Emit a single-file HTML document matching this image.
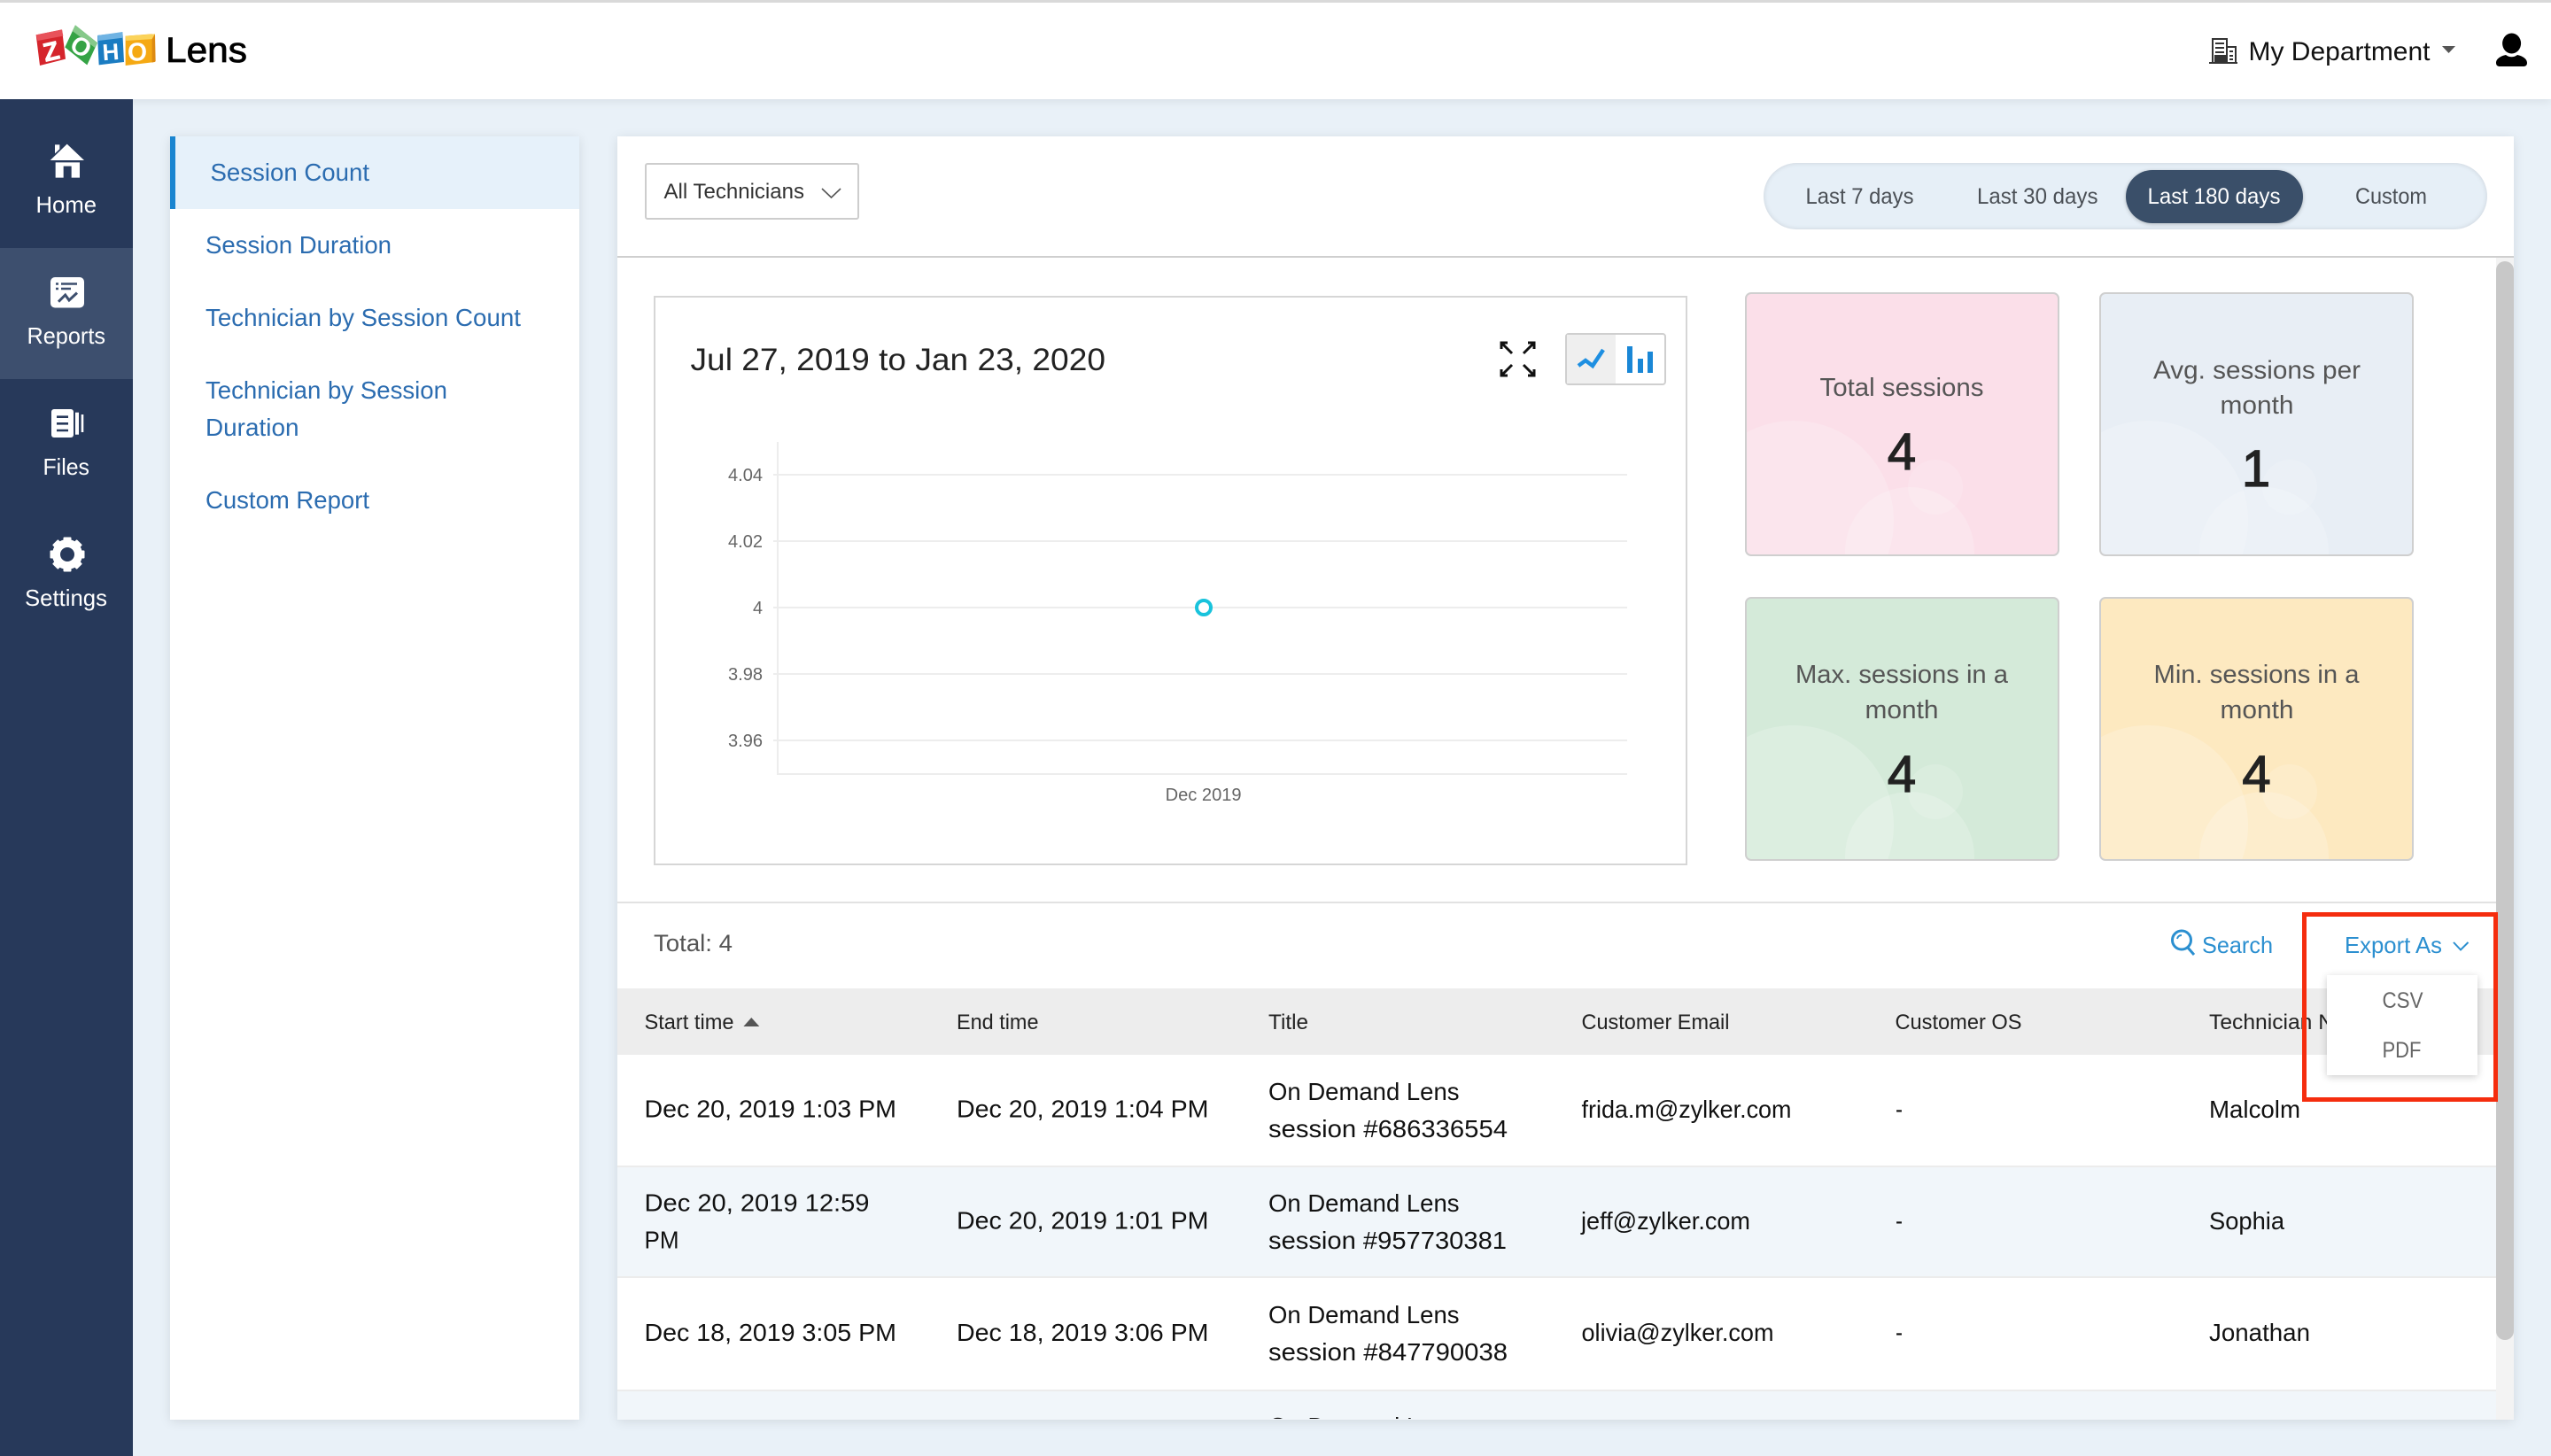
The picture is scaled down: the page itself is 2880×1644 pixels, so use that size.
<!DOCTYPE html>
<html><head><meta charset="utf-8"><title>Zoho Lens Reports</title>
<style>
html,body{margin:0;padding:0;width:2880px;height:1644px;overflow:hidden;background:#e9f1f8}
body{position:relative;font-family:"Liberation Sans",sans-serif}
.b{position:absolute;box-sizing:border-box}
.card{position:absolute;box-sizing:border-box;width:355px;height:298px;border:2px solid #cfcfcf;border-radius:7px;overflow:hidden}
.card i{position:absolute;display:block;border-radius:50%;background:rgba(255,255,255,.2)}
.card .c1{left:-60px;top:143px;width:226px;height:226px}
.card .c2{left:111px;top:218px;width:146px;height:146px}
.card .c3{left:182px;top:187px;width:62px;height:62px;background:rgba(255,255,255,.15)}
svg{position:absolute;left:0;top:0}
text{font-family:"Liberation Sans",sans-serif}
</style></head><body>
<div class="b" style="left:0;top:0;width:2880px;height:112px;background:#fff;border-top:3px solid #d9d9d9;box-shadow:0 3px 10px rgba(0,0,0,.07)"></div>
<div class="b" style="left:0;top:112px;width:150px;height:1532px;background:#27395a"></div>
<div class="b" style="left:0;top:280px;width:150px;height:148px;background:#3d4f6e"></div>
<div class="b" style="left:192px;top:154px;width:462px;height:1449px;background:#fff;box-shadow:0 2px 12px rgba(0,0,0,.10)"></div>
<div class="b" style="left:192px;top:154px;width:462px;height:82px;background:#e6f1fa;border-left:6px solid #1a85d0"></div>
<div class="b" style="left:697px;top:154px;width:2141px;height:1449px;background:#fff;box-shadow:0 2px 12px rgba(0,0,0,.10)"></div>
<div class="b" style="left:728px;top:184px;width:242px;height:64px;background:#fff;border:2px solid #cdcdcd;border-radius:3px"></div>
<div class="b" style="left:1991px;top:184px;width:817px;height:75px;background:#e6eff7;border-radius:38px;box-shadow:inset 0 0 6px rgba(0,0,0,.12)"></div>
<div class="b" style="left:2400px;top:192px;width:200px;height:60px;background:#3a4f69;border-radius:30px;box-shadow:0 1px 4px rgba(0,0,0,.25)"></div>
<div class="b" style="left:697px;top:289px;width:2141px;height:2px;background:#cfcfcf"></div>
<div class="b" style="left:738px;top:334px;width:1167px;height:643px;border:2px solid #d6d6d6;background:#fff"></div>
<div class="b" style="left:1767px;top:376px;width:114px;height:59px;background:#fff;border:2px solid #cfcfcf;border-radius:4px"></div>
<div class="b" style="left:1769px;top:378px;width:55px;height:55px;background:#efefef"></div>
<div class="card" style="left:1970px;top:330px;background:#fbdfe9"><i class="c1"></i><i class="c2"></i><i class="c3"></i></div>
<div class="card" style="left:2370px;top:330px;background:#e8eef5"><i class="c1"></i><i class="c2"></i><i class="c3"></i></div>
<div class="card" style="left:1970px;top:674px;background:#d4ead9"><i class="c1"></i><i class="c2"></i><i class="c3"></i></div>
<div class="card" style="left:2370px;top:674px;background:#fde9c0"><i class="c1"></i><i class="c2"></i><i class="c3"></i></div>
<div class="b" style="left:697px;top:1018px;width:2121px;height:2px;background:#e2e2e2"></div>
<div class="b" style="left:697px;top:1116px;width:2121px;height:75px;background:#ededed"></div>
<div class="b" style="left:697px;top:1316px;width:2121px;height:127px;background:#f1f6fa;border-top:2px solid #ececec;border-bottom:2px solid #ececec"></div>
<div class="b" style="left:697px;top:1569px;width:2121px;height:34px;background:#f1f6fa;border-top:2px solid #ececec"></div>
<div class="b" style="left:2818px;top:291px;width:20px;height:1312px;background:#f3f3f3"></div>
<div class="b" style="left:2818px;top:295px;width:20px;height:1218px;background:#c8c8c8;border-radius:10px"></div>

<svg width="2880" height="1644" viewBox="0 0 2880 1644">
<defs><clipPath id="clip"><rect x="697" y="154" width="2121" height="1448"/></clipPath></defs>
<!-- logo -->
<g transform="translate(30 20) scale(.3333)">
<polygon points="32,58 45,162 132,140 120,40" fill="#d5252c"/>
<polygon points="32,58 120,40 124,62 38,78" fill="#e8525a"/>
<text x="83" y="144" font-size="88" font-weight="700" fill="#fff" stroke="#fff" stroke-width="2" text-anchor="middle" transform="rotate(-13 83 113)">Z</text>
<polygon points="165,25 240,85 205,160 130,100" fill="#35a345"/>
<polygon points="165,25 240,85 232,102 155,45" fill="#86c98a"/>
<text x="185" y="127" font-size="85" font-weight="700" fill="#fff" text-anchor="middle" transform="rotate(32 185 97)">O</text>
<polygon points="240,60 325,50 330,150 245,160" fill="#1a7cc2"/>
<polygon points="240,60 325,48 327,68 243,78" fill="#6fb3e3"/>
<text x="285" y="143" font-size="78" font-weight="700" fill="#fff" text-anchor="middle" transform="rotate(-4 285 115)">H</text>
<polygon points="335,62 425,55 435,150 335,162" fill="#f5a913"/>
<polygon points="335,62 435,55 432,72 337,78" fill="#fbd35a"/>
<polygon points="425,72 435,55 437,148 425,152" fill="#dd8a12"/>
<text x="375" y="145" font-size="85" font-weight="700" fill="#fff" text-anchor="middle">O</text>
</g>
<text x="187" y="70" font-size="40" fill="#000" stroke="#000" stroke-width=".8" textLength="92" lengthAdjust="spacingAndGlyphs">Lens</text>
<!-- building -->
<g fill="none" stroke="#333" stroke-width="2">
<path d="M2494 71H2526"/><rect x="2498" y="44" width="16" height="27"/><rect x="2514" y="53" width="10" height="18"/>
<path d="M2501 49H2511M2501 54H2511M2501 59H2511M2517 58H2521M2517 63H2521M2517 67H2521"/>
</g><rect x="2500" y="62" width="13" height="8" fill="#333"/>
<text x="2538.5" y="68" font-size="30" fill="#111" textLength="205" lengthAdjust="spacingAndGlyphs">My Department</text>
<polygon points="2757,52 2772,52 2764.5,60" fill="#555"/>
<!-- user -->
<ellipse cx="2835.6" cy="49" rx="10.5" ry="11.5" fill="#000"/>
<path d="M2818 71C2818 66 2824 63 2829 62C2833 65 2838 65 2842 62C2847 63 2853 66 2853 71C2853 74 2851 75 2849 75H2822C2820 75 2818 74 2818 71Z" fill="#000"/>
<!-- sidebar icons -->
<g transform="translate(40 150) scale(.3333)" fill="#fff">
<polygon points="50,93 107,38 165,93"/><polygon points="66,40 82,40 82,55 66,70"/>
<path d="M68 100H150V152H122V113H95V152H68Z"/>
</g>
<rect x="57" y="313" width="38" height="34.5" rx="5" fill="#fff"/>
<g stroke="#3d4f6e" fill="none" stroke-width="2.6">
<path d="M63 320.5H66M63 326H66M69 320.5H87M69 326H80"/>
<path d="M66 340.7L73.7 333L78 339L87 330.6" stroke-width="3"/>
</g>
<rect x="58" y="462" width="25" height="32" rx="3" fill="#fff"/>
<path d="M64 470.7H77M64 478.3H77M64 486H77" stroke="#27395a" stroke-width="2.6"/>
<rect x="85" y="465.7" width="4" height="25" fill="#fff"/><rect x="91.7" y="468" width="2.6" height="20" fill="#fff"/>
<g transform="translate(76 626)" fill="#fff">
<circle r="12.5" fill="none" stroke="#fff" stroke-width="9"/>
<rect x="-4.5" y="-19.5" width="9" height="8" rx="1"/><rect x="-4.5" y="-19.5" width="9" height="8" rx="1" transform="rotate(45)"/>
<rect x="-4.5" y="-19.5" width="9" height="8" rx="1" transform="rotate(90)"/><rect x="-4.5" y="-19.5" width="9" height="8" rx="1" transform="rotate(135)"/>
<rect x="-4.5" y="-19.5" width="9" height="8" rx="1" transform="rotate(180)"/><rect x="-4.5" y="-19.5" width="9" height="8" rx="1" transform="rotate(225)"/>
<rect x="-4.5" y="-19.5" width="9" height="8" rx="1" transform="rotate(270)"/><rect x="-4.5" y="-19.5" width="9" height="8" rx="1" transform="rotate(315)"/>
</g>
<g font-size="26" fill="#fff">
<text x="40.5" y="240" textLength="68.5" lengthAdjust="spacingAndGlyphs">Home</text>
<text x="30.5" y="388" textLength="88.5" lengthAdjust="spacingAndGlyphs">Reports</text>
<text x="48.5" y="536" textLength="52.5" lengthAdjust="spacingAndGlyphs">Files</text>
<text x="28" y="684" textLength="93" lengthAdjust="spacingAndGlyphs">Settings</text>
</g>
<!-- left nav -->
<g font-size="28" fill="#2b6cb0">
<text x="237.5" y="204" textLength="179.5" lengthAdjust="spacingAndGlyphs">Session Count</text>
<text x="232" y="286" textLength="210" lengthAdjust="spacingAndGlyphs">Session Duration</text>
<text x="232" y="368" textLength="356" lengthAdjust="spacingAndGlyphs">Technician by Session Count</text>
<text x="232" y="450" textLength="273" lengthAdjust="spacingAndGlyphs">Technician by Session</text>
<text x="232" y="492" textLength="105.5" lengthAdjust="spacingAndGlyphs">Duration</text>
<text x="232" y="574" textLength="185" lengthAdjust="spacingAndGlyphs">Custom Report</text>
</g>
<!-- toolbar -->
<text x="749.5" y="224" font-size="24" fill="#333" textLength="158.5" lengthAdjust="spacingAndGlyphs">All Technicians</text>
<path d="M928 213L938.5 223L949 213" fill="none" stroke="#555" stroke-width="1.6"/>
<g font-size="25" fill="#4a4f55">
<text x="2038.5" y="230" textLength="122" lengthAdjust="spacingAndGlyphs">Last 7 days</text>
<text x="2232" y="230" textLength="136.5" lengthAdjust="spacingAndGlyphs">Last 30 days</text>
<text x="2424.5" y="230" fill="#fff" textLength="150" lengthAdjust="spacingAndGlyphs">Last 180 days</text>
<text x="2659" y="230" textLength="81" lengthAdjust="spacingAndGlyphs">Custom</text>
</g>
<!-- chart -->
<text x="779.5" y="418" font-size="35" fill="#222" textLength="468.5" lengthAdjust="spacingAndGlyphs">Jul 27, 2019 to Jan 23, 2020</text>
<g stroke="#111" stroke-width="3" fill="none">
<path d="M1695 387L1707 399M1695 394V387H1702"/>
<path d="M1732 387L1720 399M1732 394V387H1725"/>
<path d="M1695 424L1707 412M1695 417V424H1702"/>
<path d="M1732 424L1720 412M1732 417V424H1725"/>
</g>
<path d="M1782 413L1790 407L1798 413L1810 395" fill="none" stroke="#1e8fe1" stroke-width="4.5"/>
<rect x="1837" y="391" width="6" height="30" fill="#1a87d6"/><rect x="1849" y="405" width="6" height="16" fill="#1a87d6"/><rect x="1860" y="397" width="6" height="24" fill="#1a87d6"/>
<g stroke="#ededed" stroke-width="2" fill="none">
<path d="M873 536H1837M873 611H1837M873 686H1837M873 761H1837M873 836H1837"/>
<path d="M878 499V874H1837"/>
</g>
<g font-size="20" fill="#666">
<text x="822" y="543" textLength="39" lengthAdjust="spacingAndGlyphs">4.04</text>
<text x="822" y="618" textLength="39" lengthAdjust="spacingAndGlyphs">4.02</text>
<text x="850" y="693" textLength="11" lengthAdjust="spacingAndGlyphs">4</text>
<text x="822" y="768" textLength="39" lengthAdjust="spacingAndGlyphs">3.98</text>
<text x="822" y="843" textLength="39" lengthAdjust="spacingAndGlyphs">3.96</text>
<text x="1315.6" y="904" textLength="86" lengthAdjust="spacingAndGlyphs">Dec 2019</text>
</g>
<circle cx="1359" cy="686" r="8" fill="#fff" stroke="#19c3dc" stroke-width="4"/>
<!-- cards -->
<g font-size="29" fill="#555">
<text x="2054.5" y="447" textLength="185" lengthAdjust="spacingAndGlyphs">Total sessions</text>
<text x="2431" y="427.5" textLength="234" lengthAdjust="spacingAndGlyphs">Avg. sessions per</text>
<text x="2506.5" y="467" textLength="83" lengthAdjust="spacingAndGlyphs">month</text>
<text x="2027" y="771" textLength="240" lengthAdjust="spacingAndGlyphs">Max. sessions in a</text>
<text x="2105.5" y="811" textLength="83" lengthAdjust="spacingAndGlyphs">month</text>
<text x="2431.5" y="771" textLength="232" lengthAdjust="spacingAndGlyphs">Min. sessions in a</text>
<text x="2506.5" y="811" textLength="83" lengthAdjust="spacingAndGlyphs">month</text>
</g>
<g font-size="58" fill="#222" text-anchor="middle" stroke="#222" stroke-width="1.3">
<text x="2147" y="530">4</text><text x="2547" y="549">1</text><text x="2147" y="894">4</text><text x="2547.5" y="894">4</text>
</g>
<!-- table top -->
<text x="738" y="1074" font-size="27" fill="#555" textLength="89" lengthAdjust="spacingAndGlyphs">Total: 4</text>
<g fill="none" stroke="#2b8fd0" stroke-width="3">
<circle cx="2463" cy="1061.5" r="10.5"/><path d="M2470 1070L2477 1078"/><path d="M2458 1060Q2459 1056 2463 1056" stroke-width="2"/>
</g>
<g font-size="26" fill="#2b8fd0">
<text x="2486" y="1076" textLength="80" lengthAdjust="spacingAndGlyphs">Search</text>
<text x="2647" y="1076" textLength="110" lengthAdjust="spacingAndGlyphs">Export As</text>
</g>
<path d="M2770 1064L2778 1072.5L2786.5 1064" fill="none" stroke="#2b8fd0" stroke-width="2"/>
<g font-size="24" fill="#222">
<text x="727.5" y="1162" textLength="101" lengthAdjust="spacingAndGlyphs">Start time</text>
<text x="1080" y="1162" textLength="92.5" lengthAdjust="spacingAndGlyphs">End time</text>
<text x="1432" y="1162" textLength="45" lengthAdjust="spacingAndGlyphs">Title</text>
<text x="1785.5" y="1162" textLength="167" lengthAdjust="spacingAndGlyphs">Customer Email</text>
<text x="2139.5" y="1162" textLength="143" lengthAdjust="spacingAndGlyphs">Customer OS</text>
<text x="2494" y="1162" textLength="141" lengthAdjust="spacingAndGlyphs">Technician N</text>
</g>
<polygon points="839.4,1159 857.3,1159 848.3,1149" fill="#555"/>
<g font-size="28" fill="#111" clip-path="url(#clip)">
<text x="727.5" y="1261.6" textLength="284.5" lengthAdjust="spacingAndGlyphs">Dec 20, 2019 1:03 PM</text>
<text x="1080" y="1261.6" textLength="284.5" lengthAdjust="spacingAndGlyphs">Dec 20, 2019 1:04 PM</text>
<text x="1432" y="1242" textLength="215.5" lengthAdjust="spacingAndGlyphs">On Demand Lens</text>
<text x="1432" y="1284" textLength="270" lengthAdjust="spacingAndGlyphs">session #686336554</text>
<text x="1785.5" y="1262" textLength="237" lengthAdjust="spacingAndGlyphs">frida.m@zylker.com</text>
<text x="2140" y="1262" textLength="8" lengthAdjust="spacingAndGlyphs">-</text>
<text x="2494" y="1262" textLength="103" lengthAdjust="spacingAndGlyphs">Malcolm</text>

<text x="727.5" y="1367.6" textLength="254" lengthAdjust="spacingAndGlyphs">Dec 20, 2019 12:59</text>
<text x="727.5" y="1409.4" textLength="39" lengthAdjust="spacingAndGlyphs">PM</text>
<text x="1080" y="1387.7" textLength="284.5" lengthAdjust="spacingAndGlyphs">Dec 20, 2019 1:01 PM</text>
<text x="1432" y="1368" textLength="215.5" lengthAdjust="spacingAndGlyphs">On Demand Lens</text>
<text x="1432" y="1410" textLength="269" lengthAdjust="spacingAndGlyphs">session #957730381</text>
<text x="1785" y="1388" textLength="191" lengthAdjust="spacingAndGlyphs">jeff@zylker.com</text>
<text x="2140" y="1388" textLength="8" lengthAdjust="spacingAndGlyphs">-</text>
<text x="2494" y="1388" textLength="85" lengthAdjust="spacingAndGlyphs">Sophia</text>

<text x="727.5" y="1514" textLength="284.5" lengthAdjust="spacingAndGlyphs">Dec 18, 2019 3:05 PM</text>
<text x="1080" y="1514" textLength="284.5" lengthAdjust="spacingAndGlyphs">Dec 18, 2019 3:06 PM</text>
<text x="1432" y="1494" textLength="215.5" lengthAdjust="spacingAndGlyphs">On Demand Lens</text>
<text x="1432" y="1536" textLength="270" lengthAdjust="spacingAndGlyphs">session #847790038</text>
<text x="1785.5" y="1514" textLength="217" lengthAdjust="spacingAndGlyphs">olivia@zylker.com</text>
<text x="2140" y="1514" textLength="8" lengthAdjust="spacingAndGlyphs">-</text>
<text x="2494" y="1514" textLength="114" lengthAdjust="spacingAndGlyphs">Jonathan</text>

<text x="1432" y="1620" textLength="215.5" lengthAdjust="spacingAndGlyphs">On Demand Lens</text>
</g>
</svg>

<div class="b" style="left:2627px;top:1101px;width:170px;height:113px;background:#fff;box-shadow:0 2px 8px rgba(0,0,0,.2)"></div>
<div class="b" style="left:2599px;top:1030px;width:221px;height:214px;border:5px solid #f52d0e"></div>
<svg width="2880" height="1644" viewBox="0 0 2880 1644">
<g font-size="25" fill="#666">
<text x="2689.5" y="1138" textLength="46" lengthAdjust="spacingAndGlyphs">CSV</text>
<text x="2689.5" y="1194" textLength="44" lengthAdjust="spacingAndGlyphs">PDF</text>
</g>
</svg>
</body></html>
